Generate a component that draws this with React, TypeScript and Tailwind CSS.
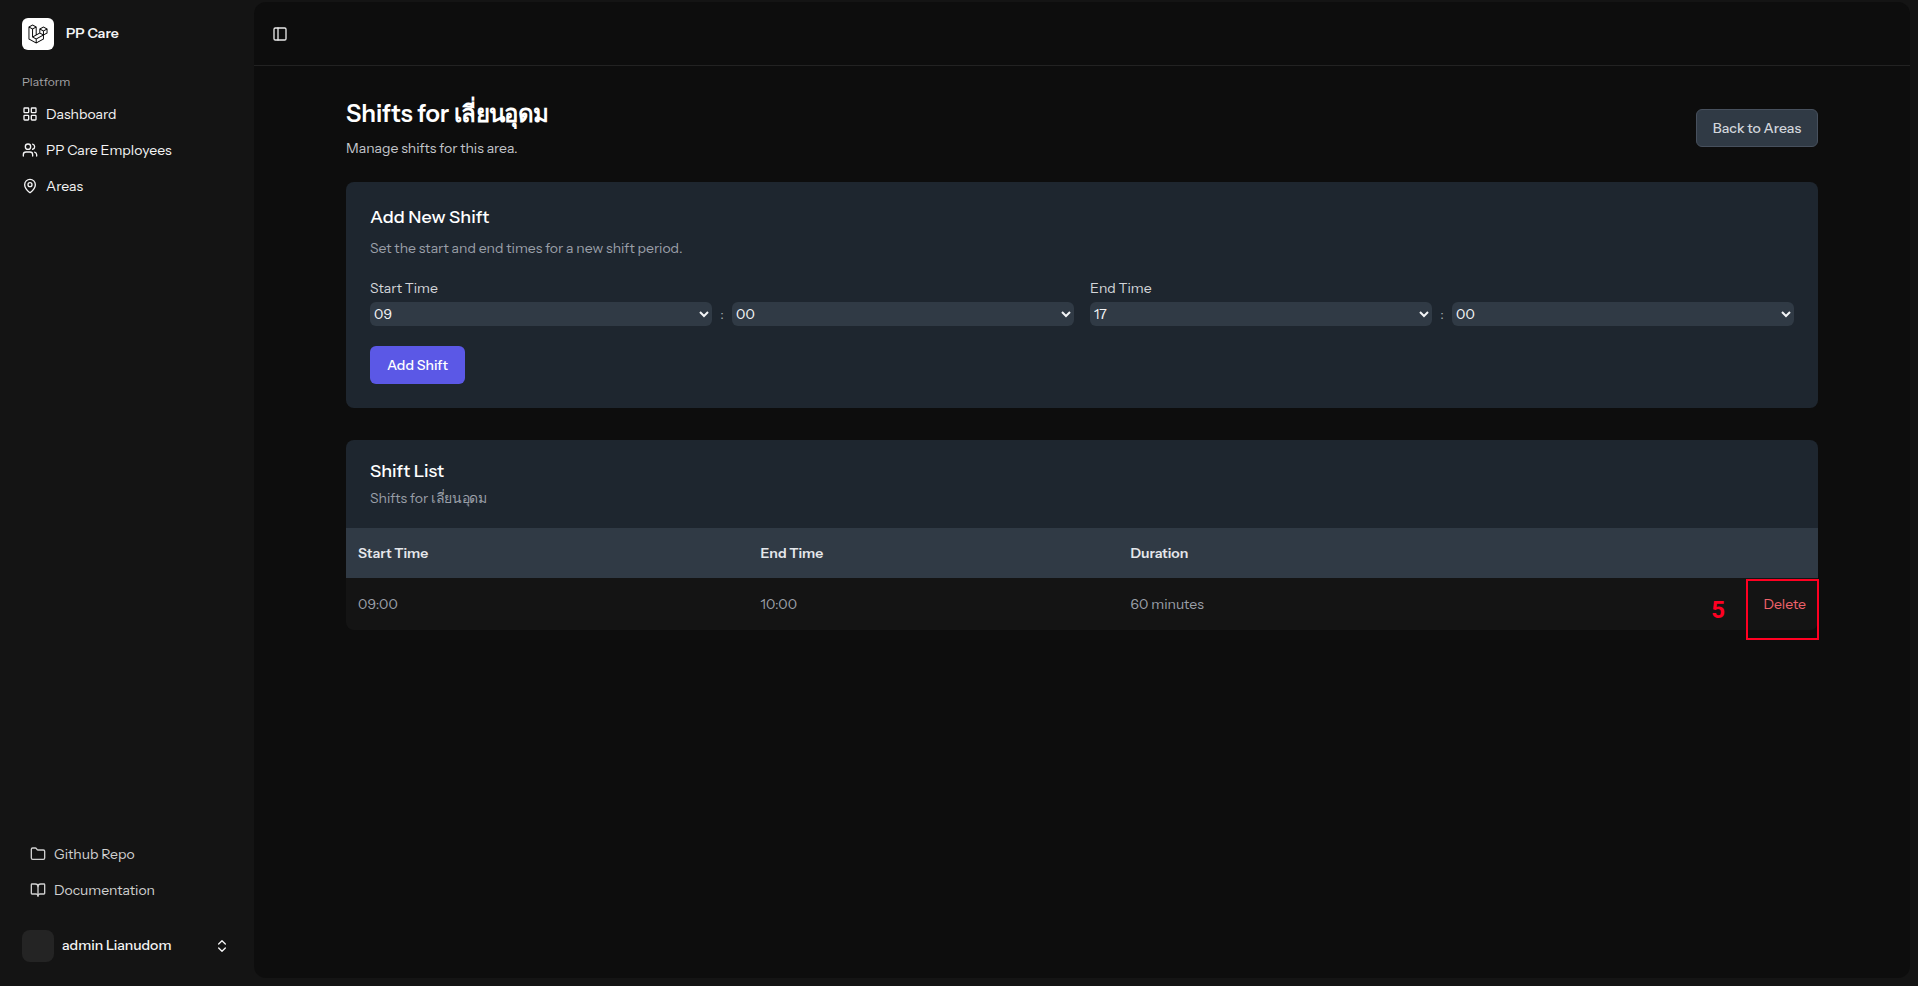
import React from 'react';
import { BookOpen, ChevronsUpDown, Folder, LayoutGrid, MapPin, PanelLeft, Users } from 'lucide-react';

const hours = Array.from({ length: 24 }, (_, i) => String(i).padStart(2, '0'));
const minutes = ['00', '15', '30', '45'];

const AppLogoIcon = () => (
  <svg viewBox="0 0 40 42" className="size-5 fill-black">
    <path
      fillRule="evenodd"
      clipRule="evenodd"
      d="M17.2 5.63325L8.6 0.855469L0 5.63325V32.1434L16.2 41.1434L32.4 32.1434V23.699L40 19.4767V9.85547L31.4 5.07769L22.8 9.85547V18.2999L17.2 21.411V5.63325ZM38 18.2999L32.4 21.411V15.2545L38 12.1434V18.2999ZM36.9409 10.4439L31.4 13.5221L25.8591 10.4439L31.4 7.36561L36.9409 10.4439ZM24.8 18.2999V12.1434L30.4 15.2545V21.411L24.8 18.2999ZM23.8 20.0323L29.3409 23.1105L16.2 30.411L10.6591 27.3328L23.8 20.0323ZM7.6 27.9212L15.2 32.1434V38.2999L2 30.9666V7.92116L7.6 11.0323V27.9212ZM8.6 9.29991L3.05913 6.22165L8.6 3.14339L14.1409 6.22165L8.6 9.29991ZM30.4 24.8101L17.2 32.1434V38.2999L30.4 30.9666V24.8101ZM9.6 11.0323L15.2 7.92117V22.5221L9.6 25.6333V11.0323Z"
    />
  </svg>
);

const Sidebar = () => {
  return (
    <aside className="w-[254px] shrink-0 flex flex-col text-sm text-[#f4f4f5]">
      <div className="flex items-center gap-3 pl-[22px] pt-[18px]">
        <div className="size-8 rounded-md bg-white flex items-center justify-center">
          <AppLogoIcon />
        </div>
        <span className="font-semibold leading-4 -mt-0.5">PP Care</span>
      </div>
      <div className="mt-4 h-8 flex items-center pl-[22px] text-xs text-[#a5a5a8]">Platform</div>
      <nav className="flex flex-col gap-1 pl-[22px]">
        <a className="h-8 flex items-center gap-2"><LayoutGrid className="size-4" /><span>Dashboard</span></a>
        <a className="h-8 flex items-center gap-2"><Users className="size-4" /><span>PP Care Employees</span></a>
        <a className="h-8 flex items-center gap-2"><MapPin className="size-4" /><span>Areas</span></a>
      </nav>
      <div className="mt-auto flex flex-col gap-1 pl-[30px] text-[#d0d0d0]">
        <a className="h-8 flex items-center gap-2"><Folder className="size-4" /><span>Github Repo</span></a>
        <a className="h-8 flex items-center gap-2"><BookOpen className="size-4" /><span>Documentation</span></a>
      </div>
      <div className="mt-6 mb-6 h-8 flex items-center gap-2 pl-[22px] pr-6">
        <div className="size-8 rounded-lg bg-[#242424]" />
        <span className="font-medium leading-4 -mt-0.5">admin Lianudom</span>
        <ChevronsUpDown className="size-4 ml-auto" />
      </div>
    </aside>
  );
};

const TimeSelect = ({ label, hour }: { label: string; hour: string }) => {
  return (
    <div>
      <label className="block text-sm text-[#d3d5d9]">{label}</label>
      <div className="mt-1 h-6 flex items-center gap-2 text-sm">
        <select defaultValue={hour} className="h-6 flex-1 rounded-md bg-[#303a45] text-[#f3f4f6]">
          {hours.map((h) => <option key={h}>{h}</option>)}
        </select>
        <span className="w-1 text-center text-[#9a9fa8]">:</span>
        <select defaultValue="00" className="h-6 flex-1 rounded-md bg-[#303a45] text-[#f3f4f6]">
          {minutes.map((m) => <option key={m}>{m}</option>)}
        </select>
      </div>
    </div>
  );
};

const App = () => {
  return (
    <div className="w-full h-[986px] flex bg-[#141414] overflow-hidden font-['Instrument_Sans',sans-serif]">
      <Sidebar />
      <main className="mt-0.5 mr-2 mb-2 flex-1 rounded-xl bg-[#0d0d0d]">
        <header className="h-16 border-b border-[#222222] flex items-center pl-[18px] text-[#e8e8e8]">
          <PanelLeft className="size-4" />
        </header>
        <div className="w-[1472px] mx-auto pt-8">
          <div className="flex items-center justify-between">
            <div className="h-[60px]">
              <h1 className="h-8 text-2xl font-semibold text-white">Shifts for <span className="tracking-[-0.6px]">เลี่ยนอุดม</span></h1>
              <p className="mt-2 text-sm text-[#c3c6cb]">Manage shifts for this area.</p>
            </div>
            <button className="h-[38px] w-[122px] rounded-md border border-[#47505d] bg-[#303a45] text-sm font-medium text-[#d1d5db]">
              Back to Areas
            </button>
          </div>

          <section className="mt-6 h-[226px] rounded-lg bg-[#1e262f] p-6">
            <h2 className="h-6 text-lg leading-[23px] font-medium text-white">Add New Shift</h2>
            <p className="mt-2 text-sm text-[#9a9fa8]">Set the start and end times for a new shift period.</p>
            <div className="mt-5 grid grid-cols-2 gap-4">
              <TimeSelect label="Start Time" hour="09" />
              <TimeSelect label="End Time" hour="17" />
            </div>
            <button className="mt-5 h-[38px] w-[95px] rounded-md bg-[#5b58e6] text-sm font-medium text-white">Add Shift</button>
          </section>

          <section className="relative mt-8">
            <div className="h-[88px] rounded-t-lg bg-[#1e262f] px-6 pt-5">
              <h2 className="h-6 text-lg leading-[23px] font-medium text-white">Shift List</h2>
              <p className="mt-1 h-5 text-sm text-[#9a9fa8]">Shifts for <span className="tracking-[-0.3px]">เลี่ยนอุดม</span></p>
            </div>
            <table className="w-full table-fixed text-left text-sm">
              <thead className="bg-[#303a45] text-[#e5e7eb]">
                <tr className="h-[50px]">
                  <th className="w-[402px] pl-3 font-semibold">Start Time</th>
                  <th className="w-[370px] pl-[12.5px] font-semibold">End Time</th>
                  <th className="pl-[12.5px] font-semibold">Duration</th>
                  <th className="w-[100px]" />
                </tr>
              </thead>
              <tbody className="text-[#9a9fa8]">
                <tr className="h-[52px]">
                  <td className="pl-3 bg-[#141414] rounded-bl-lg">09:00</td>
                  <td className="pl-[12.5px] bg-[#141414]">10:00</td>
                  <td className="pl-[12.5px] bg-[#141414]">60 minutes</td>
                  <td className="pr-3 bg-[#141414] rounded-br-lg text-right text-[#f0626b]">Delete</td>
                </tr>
              </tbody>
            </table>
            {/* step marker over the delete action */}
            <span className="absolute right-[93px] top-[156px] font-[Roboto,sans-serif] text-2xl leading-7 font-bold text-[#ff0022]">5</span>
            <div className="absolute -right-px top-[139px] w-[73px] h-[61px] border-2 border-[#ff0022]" />
          </section>
        </div>
      </main>
    </div>
  );
};

export default App;
